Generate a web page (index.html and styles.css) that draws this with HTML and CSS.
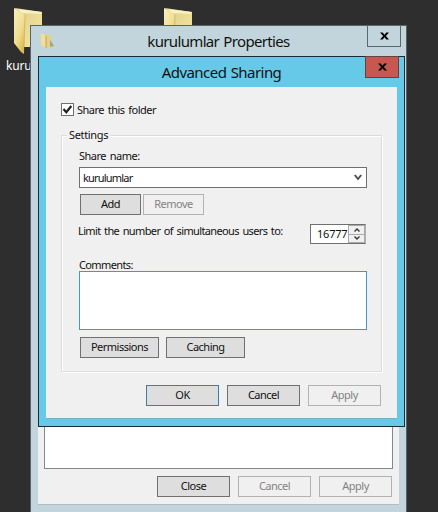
FILE: index.html
```html
<!DOCTYPE html>
<html lang="en">
<head>
<meta charset="utf-8">
<title>Advanced Sharing</title>
<link rel="stylesheet" href="styles.css">
</head>
<body>
<svg width="0" height="0" class="defs">
  <defs>
    <linearGradient id="back" x1="0" y1="0" x2="1" y2="1"><stop offset="0" stop-color="#dfcc82"/><stop offset="1" stop-color="#f5e9a8"/></linearGradient>
    <linearGradient id="front" x1="0" y1="0" x2="0.7" y2="1"><stop offset="0" stop-color="#f8efbd"/><stop offset="0.6" stop-color="#f0dd8f"/><stop offset="1" stop-color="#d9b94f"/></linearGradient>
    <symbol id="folder" viewBox="0 0 29 46">
      <path d="M1 0 L28 4 L28 39 L10 39 Z" fill="url(#back)"/>
      <path d="M3 1 L28 4 L27 6 L8 5 Z" fill="#f8f0c5"/>
      <path d="M0 0 L11 7 L10 46 L7 44 L0 35 Z" fill="url(#front)"/>
      <path d="M11 7 L10 39" stroke="#c9ae5c" stroke-width=".7"/>
    </symbol>
  </defs>
</svg>
<main class="desktop">
  <div class="shortcut first"><svg width="29" height="46"><use href="#folder"/></svg><span>kurulumlar</span></div>
  <div class="shortcut second"><svg width="29" height="46"><use href="#folder"/></svg></div>

  <section class="window properties">
    <header class="titlebar">
      <svg class="title-icon" width="14" height="16" viewBox="0 0 14 16"><path d="M4 1 L10 2 V14 H4Z" fill="#e3d188"/><path d="M0 0 L5 3 V15 L0 12Z" fill="#f1df98"/><path d="M5 3 V15" stroke="#b9a666"/><path d="M9 7 L12 11 L13 13 L9 14Z" fill="#aaa579"/></svg>
      <h1>kurulumlar Properties</h1>
      <button class="close"><svg width="9" height="8" viewBox="0 0 10 8"><path d="M0 0H3L5 2.5 7 0H10L6.5 4 10 8H7L5 5.5 3 8H0L3.5 4Z"/></svg></button>
    </header>
    <div class="client">
      <div class="list"></div>
      <div class="actions"><button>Close</button><button disabled>Cancel</button><button disabled>Apply</button></div>
    </div>
  </section>

  <section class="window dialog">
    <header class="titlebar">
      <h1>Advanced Sharing</h1>
      <button class="close"><svg width="9" height="8" viewBox="0 0 10 8"><path d="M0 0H3L5 2.5 7 0H10L6.5 4 10 8H7L5 5.5 3 8H0L3.5 4Z"/></svg></button>
    </header>
    <div class="client">
      <div class="check"><span class="box"><svg width="11" height="11" viewBox="0 0 11 11"><path d="M1.5 5 L4.3 8.3 L9.3 2" fill="none" stroke="#222" stroke-width="2.2"/></svg></span><span class="share-text">Share this folder</span></div>
      <div class="group">
        <span class="legend">Settings</span>
        <div class="label name-label">Share name:</div>
        <div class="combo"><span>kurulumlar</span><svg width="8" height="7" viewBox="0 0 8 7"><path d="M.8 1 L4 5 L7.2 1" fill="none" stroke="#505050" stroke-width="2"/></svg></div>
        <div class="pair small"><button>Add</button><button disabled>Remove</button></div>
        <div class="limit"><span class="limit-text">Limit the number of simultaneous users to:</span>
          <div class="spin"><span class="value">16777</span><div class="arrows"><i><svg width="6" height="4" viewBox="0 0 6 4"><path d="M.5 3.5 L3 1 L5.5 3.5"/></svg></i><i><svg width="6" height="4" viewBox="0 0 6 4"><path d="M.5 .5 L3 3 L5.5 .5"/></svg></i></div></div>
        </div>
        <div class="label comments-label">Comments:</div>
        <div class="comments"></div>
        <div class="pair large"><button>Permissions</button><button>Caching</button></div>
      </div>
      <div class="actions"><button class="default">OK</button><button>Cancel</button><button disabled>Apply</button></div>
    </div>
  </section>
</main>
</body>
</html>
```

FILE: styles.css
```css
* { box-sizing: border-box; }
body { margin: 0; overflow: hidden; }
.defs { position: absolute; }
svg { display: block; flex: none; }
.desktop { position: relative; width: 438px; height: 512px; overflow: hidden; background: #2e2e2e; color: #111; font: 11px/14px "Noto Sans", "Open Sans", sans-serif; letter-spacing: -.63px; word-spacing: 1.3px; white-space: nowrap; }
.shortcut { position: absolute; top: 8px; color: #fff; letter-spacing: -.2px; }
.first { left: 6px; }
.second { left: 156px; }
.shortcut svg { margin-left: 8px; }
.shortcut span { display: block; margin-top: 5px; font-size: 12px; }
.window { position: absolute; display: flex; flex-direction: column; }
.properties { left: 30px; top: 25px; width: 377px; height: 490px; padding: 0 7px 9px; border: 1px solid #57636a; background: #c3d5dc; }
.dialog { left: 38px; top: 56px; width: 367px; height: 371px; padding: 0 7px 7px; border: 1px solid #152d38; background: #66c9e8; }
.titlebar { position: relative; height: 30px; flex: none; display: flex; align-items: center; justify-content: center; }
h1 { margin: 0; font: 400 15px/20px "Noto Sans", "Open Sans", sans-serif; letter-spacing: -.66px; word-spacing: 1px; }
.dialog h1 { letter-spacing: -.55px; }
.title-icon { position: absolute; left: 3px; top: 7px; }
.close { position: absolute; top: -1px; right: -2px; width: 34px; height: 22px; padding: 0; background: #c3d5dc; border: 1px solid #5c676c; display: grid; place-items: center; }
.dialog .close { background: #c75850; border-color: #67413f; }
.client { flex: 1; background: #f0f0f0; border-bottom: 1px solid #b2bdc1; display: flex; flex-direction: column; }
.dialog .client { padding: 16px 15px 0; border-bottom-color: #75b1c4; }
.properties .client { padding: 0 6px; }
.list { height: 413px; background: #fff; border: 1px solid #828790; }
button { font: inherit; letter-spacing: -.5px; color: #111; height: 21px; padding: 0 0 1px; text-align: center; border: 1px solid #707070; background: #dedede; }
button:disabled { color: #838383; background: #f0f0f0; border-color: #b2b2b2; }
.actions { display: flex; gap: 8px; justify-content: flex-end; }
.actions button { width: 73px; }
.dialog .actions { margin: 13px 1px 0 0; }
.properties .actions { margin: 7px 1px 0 0; }
button.default { border-color: #397fad; }
.check { display: flex; align-items: center; gap: 3px; height: 13px; }
.share-text { letter-spacing: -.5px; }
.box { width: 13px; height: 13px; border: 1px solid #707070; background: #fff; }
.group { position: relative; height: 237px; margin: 19px 0 0; width: 321px; padding: 13px 14px 0 17px; border: 1px solid #dcdcdc; box-shadow: inset 1px 1px #fff, 1px 1px #fff; }
.legend { position: absolute; left: 5px; top: -8px; padding: 0 2px; background: #f0f0f0; letter-spacing: -.35px; }
.name-label { letter-spacing: -.5px; }
.combo { width: 288px; height: 21px; margin-top: 4px; border: 1px solid #707070; background: #fff; display: flex; align-items: center; justify-content: space-between; padding: 0 4px 0 3px; letter-spacing: -.8px; }
.pair { display: flex; margin: 6px 0 0 1px; }
.small { gap: 2px; }
.small button { width: 61px; }
.large { gap: 7px; margin-top: 7px; }
.large button { width: 79px; }
.limit { width: 287px; height: 20px; margin-top: 9px; display: flex; justify-content: space-between; }
.limit-text { margin-left: -1px; }
.spin { flex: none; display: flex; width: 56px; height: 20px; border: 1px solid #707070; border-right-color: #b0b0b0; background: #fff; }
.value { width: 37px; padding: 2px 0 0 6px; letter-spacing: -.2px; }
.arrows { width: 17px; height: 18px; display: grid; grid-template-rows: 1fr 1fr; gap: 1px; padding: 1px; background: #aaa; }
.arrows i { display: grid; place-items: center; background: #f0f0f0; }
.arrows path { fill: none; stroke: #333; stroke-width: 1.4; }
.comments-label { margin-top: 14px; }
.comments { width: 288px; height: 59px; margin-top: -1px; border: 1px solid #3b9dc5; background: #fff; }
```
